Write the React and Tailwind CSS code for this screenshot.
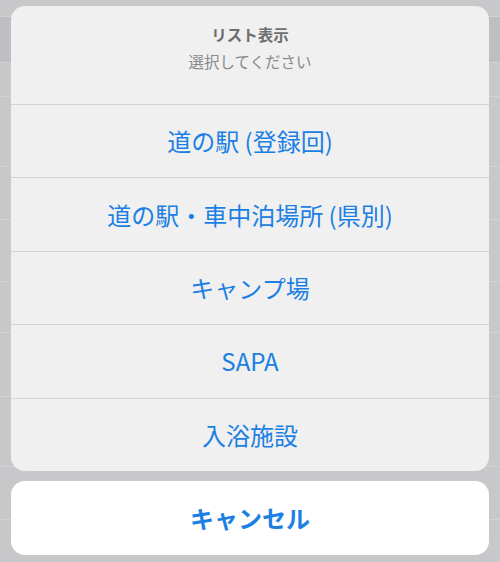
import React from 'react'

const options = ['道の駅 (登録回)', '道の駅・車中泊場所 (県別)', 'キャンプ場', 'SAPA', '入浴施設']

// faint rows of the list page behind the dimmed overlay
const backRows = [17, 46, 34, 70, 53, 62, 51, 64, 70, 53]

export default function App() {
  return (
    <div
      className="relative w-[500px] h-[562px] overflow-hidden bg-[#c8c8ca]"
      style={{ fontFamily: '"Noto Sans CJK JP", "Noto Sans", sans-serif' }}
    >
      {/* page behind */}
      <div className="flex flex-col">
        {backRows.map((h, i) => (
          <div
            key={i}
            className={`border-b border-[#d2d2d4] ${i === 1 ? 'bg-[#bfbfc3]' : ''}`}
            style={{ height: h }}
          />
        ))}
      </div>

      {/* action sheet */}
      <div className="absolute inset-0 flex flex-col px-[11px] pt-[6px]">
        <div className="rounded-[14px] bg-[#f0f0f0] overflow-hidden">
          <div className="h-[98px] flex flex-col items-center pt-[17px]">
            <div className="text-[15.5px] leading-[22px] font-bold text-[#6e6e6e]">リスト表示</div>
            <div className="mt-[5px] text-[15.5px] leading-[22px] text-[#8a8a8a]">選択してください</div>
          </div>
          {options.map((o) => (
            <div
              key={o}
              className="h-[73.4px] border-t border-[#d4d4d4] flex items-center justify-center text-[24px] text-[#1b7fe3]"
            >
              {o}
            </div>
          ))}
        </div>
        <div className="mt-[10px] h-[74px] rounded-[14px] bg-white flex items-center justify-center text-[24px] font-bold text-[#1b7fe3]">
          キャンセル
        </div>
      </div>
    </div>
  )
}
